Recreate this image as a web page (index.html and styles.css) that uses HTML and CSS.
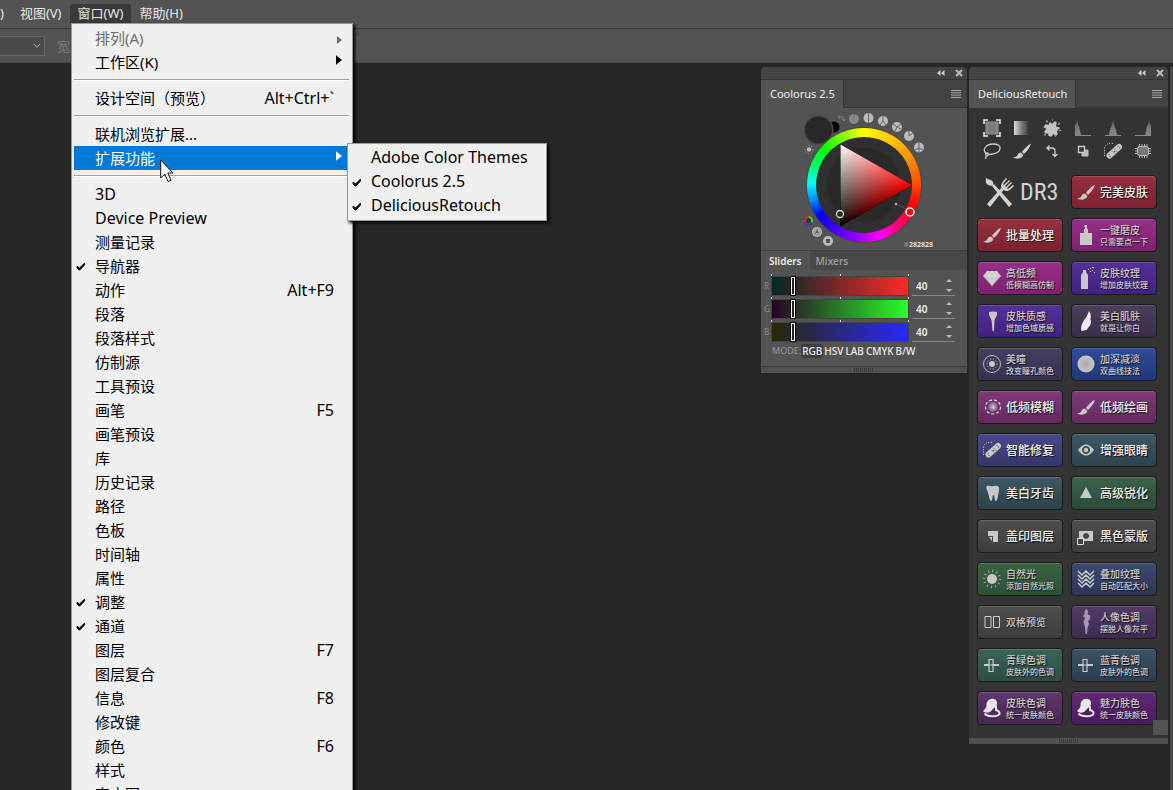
FILE: index.html
```html
<!DOCTYPE html>
<html lang="zh-CN">
<head>
<meta charset="utf-8">
<title>窗口</title>
<link rel="stylesheet" href="styles.css">
</head>
<body>
<svg class="defs" aria-hidden="true">
  <defs>
    <linearGradient id="fade"><stop offset="0" stop-color="#ddd"/><stop offset="1" stop-color="#bbb" stop-opacity="0"/></linearGradient>
    <linearGradient id="spike" x1="0" y1="0" x2="0" y2="1"><stop offset="0" stop-color="#666"/><stop offset="1" stop-color="#888"/></linearGradient>
    <radialGradient id="ball"><stop offset="0" stop-color="#aaa"/><stop offset="1" stop-color="#c6c6c6"/></radialGradient>
    <radialGradient id="soft"><stop offset="0" stop-color="#ddd"/><stop offset="1" stop-color="#aaa" stop-opacity=".3"/></radialGradient>
  </defs>
  <symbol id="check" viewBox="0 0 10 10"><path d="M1 5l2.500 2L8.500 2v2L4 9H3L1 7z" fill="#000" stroke="#000" stroke-width=".8"/></symbol>
  <symbol id="brush" viewBox="0 0 20 20"><path d="M19 2.500c-3 1.500-7 5.500-9 8.500l2 2c3-2.500 6-6.500 7-10.500zM9 11.500c-2 0-3 1-3.500 2.500S3 16.500 1 16.500c3 2 9 1.500 10.500-2.500z"/></symbol>
  <symbol id="patch" viewBox="0 0 20 20"><path d="M6.500 14.500 16 6" stroke="#c9c9c9" stroke-width="6" stroke-linecap="round"/><path d="M9 9.500l4 4M11 7.500l4 4" stroke="#777" stroke-width=".8"/><g fill="#666"><circle cx="6" cy="13.500" r=".7"/><circle cx="7" cy="15.500" r=".7"/><circle cx="15" cy="5.500" r=".7"/><circle cx="16.500" cy="7" r=".7"/><circle cx="11.500" cy="10.500" r=".8"/></g><path d="M10 2.500Q2 1.500 1.500 8v8" fill="none" stroke="#ddd" stroke-dasharray="1 1.500"/></symbol>
  <symbol id="lady" viewBox="0 0 20 20"><path d="M12 1C7 0 4 4 4.500 8c.2 2-2 3-3.500 5 1.500 2 5 2 7 1 2-1 2-3 4-4 2-1 3.500-3 3-5.500C14.700 2.500 13.500 1.300 12 1z"/><path d="M14 8v4c3 1 4 2 3.500 4-2 3-12 3-15-.5" fill="none" stroke="#e8e8e8" stroke-width="2"/></symbol>
  <symbol id="shift" viewBox="0 0 20 20"><path d="M2 10h5m4 0h6" stroke="#c8c8c8" stroke-width="2"/><path d="M7 4.500h4v12H7z" fill="none" stroke="#c8c8c8" stroke-width="1.200"/><path d="M7 10h4" stroke="#c8c8c8"/></symbol>
  <symbol id="more" viewBox="0 0 10 8"><path d="M0 .5h10M0 2.800h10M0 5.100h10M0 7.400h10" stroke="#aaa"/></symbol>
  <symbol id="shrink" viewBox="0 0 8 6"><path d="M3.500 0v6L0 3zM7.500 0v6L4 3z" fill="#ccc"/></symbol>
  <symbol id="close" viewBox="0 0 8 8"><path d="M1 1l6 6M7 1 1 7" stroke="#bbb" stroke-width="2"/></symbol>
</svg>

<nav class="menubar">
  <button class="edge">)</button>
  <button>视图(V)</button>
  <button class="open">窗口(W)</button>
  <button>帮助(H)</button>
</nav>
<div class="options">
  <button class="drop" aria-label="比例"><svg viewBox="0 0 8 6" width="8" height="6"><path d="M1 1l3 3.500L7 1" fill="none" stroke="#aaa"/></svg></button>
  <label for="w">宽度:</label>
  <input id="w" type="text" disabled>
</div>

<main class="workspace">
  <section class="panel coolorus">
    <div class="titlebar"><button aria-label="折叠"><svg width="8" height="6"><use href="#shrink"/></svg></button><button aria-label="关闭"><svg width="8" height="8"><use href="#close"/></svg></button></div>
    <div class="tabs"><button class="tab">Coolorus 2.5</button><button class="more" aria-label="菜单"><svg width="10" height="8"><use href="#more"/></svg></button></div>
    <div class="wheel">
      <svg viewBox="761 108 206 142" width="100%">
        <defs>
          <linearGradient id="hue" gradientUnits="userSpaceOnUse" x1="840" y1="0" x2="912" y2="0"><stop stop-color="#000"/><stop offset="1" stop-color="#f00"/></linearGradient>
          <linearGradient id="white" gradientUnits="userSpaceOnUse" x1="876" y1="205" x2="840" y2="144"><stop stop-color="#000"/><stop offset="1" stop-color="#fff"/></linearGradient>
        </defs>
        <circle cx="834" cy="127" r="5.500" fill="#000"/>
        <circle cx="818.500" cy="130" r="15" fill="#4a4a4a"/>
        <circle cx="818.500" cy="130" r="13.500" fill="#282828"/>
        <circle cx="864" cy="185" r="58" fill="#484848"/>
        <foreignObject x="807" y="128" width="114" height="114"><div class="ring"></div></foreignObject>
        <circle cx="864" cy="185" r="48" fill="#2f2f2f"/>
        <circle cx="864" cy="185" r="37" fill="#292929"/>
        <g class="blend"><path d="M840.500 144.500 912 185 840.500 226z" fill="url(#hue)"/><path class="add" d="M840.500 144.500 912 185 840.500 226z" fill="url(#white)"/></g>
        <circle cx="840" cy="214" r="3.500" fill="#282828" stroke="#ddd" stroke-width="1.300"/>
        <path d="M896 204l10 5" stroke="#555"/><circle cx="896" cy="204" r="1.300" fill="#aaa"/>
        <circle cx="910" cy="212" r="4" fill="#f00" stroke="#fff" stroke-width="1.500"/>
        <path d="M839 117h3q2 0 2 3M840 115l-2 2 2 2M842 119l2 2 2-2" fill="none" stroke="#888" stroke-width=".8"/>
        <g fill="#bbb"><circle cx="854" cy="119" r="5" fill="#888"/><circle cx="868.500" cy="118" r="5"/><circle cx="883" cy="121" r="5"/><circle cx="897" cy="127" r="5"/><circle cx="909" cy="136" r="5"/><circle cx="919" cy="147.500" r="5"/></g>
        <g stroke="#666" stroke-width="1" fill="none"><path d="M854 114v5M868.500 113v10M883 116v5l-3 4m3-4 3 4M893 124l4 3-2 4m2-4 4-3m-4 3 4 2M909 136v-5m0 5 4-3M919 143v9M915 150l4-2 4 2"/></g>
        <circle cx="809" cy="149.500" r="2.200" fill="#bbb"/><circle cx="809" cy="149.500" r="4" fill="none" stroke="#aaa" stroke-dasharray="1 2"/>
        <circle cx="808.500" cy="220.500" r="4.500" fill="#333"/>
        <g fill="none" stroke-width="2"><path d="M808.500 217a3.600 3.600 0 0 0-3 5.500" stroke="#e22"/><path d="M808.500 217a3.600 3.600 0 0 1 3 5.500" stroke="#5c3"/><path d="M805.500 222.500a3.600 3.600 0 0 0 6 0" stroke="#24e"/></g>
        <circle cx="817" cy="232" r="5" fill="#bbb"/><circle cx="817" cy="232" r="3.300" fill="none" stroke="#777" stroke-width=".7"/><path d="M817 229l2.500 4.500h-5z" fill="#666"/>
        <circle cx="828" cy="241" r="5" fill="#bbb"/><path d="M826 239h4v4h-4z" fill="#555"/>
        <text class="hash" x="904" y="247">#</text><text class="hex" x="909" y="247">282828</text>
      </svg>
    </div>
    <div class="subtabs"><button class="on">Sliders</button><button>Mixers</button></div>
    <div class="sliders">
      <div class="channel"><label for="r">R</label><div class="track red"><input id="r" type="range" min="5" max="255" value="40"></div><div class="value"><input type="text" value="40" aria-label="R"><button aria-label="调节 R"><svg viewBox="0 0 6 13" width="6" height="13"><path d="M0 3 3 0l3 3zM0 10l3 3 3-3z" fill="#bbb"/></svg></button></div></div>
      <div class="channel"><label for="g">G</label><div class="track green"><input id="g" type="range" min="5" max="255" value="40"></div><div class="value"><input type="text" value="40" aria-label="G"><button aria-label="调节 G"><svg viewBox="0 0 6 13" width="6" height="13"><path d="M0 3 3 0l3 3zM0 10l3 3 3-3z" fill="#bbb"/></svg></button></div></div>
      <div class="channel"><label for="b">B</label><div class="track blue"><input id="b" type="range" min="5" max="255" value="40"></div><div class="value"><input type="text" value="40" aria-label="B"><button aria-label="调节 B"><svg viewBox="0 0 6 13" width="6" height="13"><path d="M0 3 3 0l3 3zM0 10l3 3 3-3z" fill="#bbb"/></svg></button></div></div>
      <div class="mode"><span>MODE:</span><button class="on">RGB</button><button>HSV</button><button>LAB</button><button>CMYK</button><button>B/W</button></div>
    </div>
    <div class="grip"></div>
  </section>

  <section class="panel retouch">
    <div class="titlebar"><button aria-label="折叠"><svg width="8" height="6"><use href="#shrink"/></svg></button><button aria-label="关闭"><svg width="8" height="8"><use href="#close"/></svg></button></div>
    <div class="tabs"><button class="tab">DeliciousRetouch</button><button class="more" aria-label="菜单"><svg width="10" height="8"><use href="#more"/></svg></button></div>
    <div class="content">
      <div class="tools">
        <button aria-label="选区"><svg viewBox="0 0 20 20"><path d="M4 4h12v12H4z" fill="#7c7c7c" stroke="#999"/><path d="M2 6V2h4M14 2h4v4M18 14v4h-4M6 18H2v-4" fill="none" stroke="#eee" stroke-width="1.500"/></svg></button>
        <button aria-label="渐变"><svg viewBox="0 0 20 20"><path d="M2 3h15v14H2z" fill="url(#fade)"/></svg></button>
        <button aria-label="污点"><svg viewBox="0 0 20 20" fill="#c4c4c4"><path d="M8 5l2 2 3-3 1 1-1 4 4 1-3 3 1 3-1 1-3-2-2 3-2-1v-3l-3 1-1-1 2-3-2-3 1-1 3 1z" stroke="#c4c4c4" stroke-width="1.500" stroke-linejoin="round"/><path d="M4 2l2 1-1 2zM17 4l1 2-2 1zM1 9l2-1v2zM17.500 11.500l2 1-2 1zM12 17l2 1-1 1zM2 16l2 .5-1 2zM10 1l1 1-1 1z"/></svg></button>
        <button aria-label="阴影"><svg viewBox="0 0 20 20"><path d="M2 17V5l1 3 1-6 1 5 1 1 1 5 1 4z" fill="url(#spike)"/><path d="M2 17.500h16" stroke="#888"/></svg></button>
        <button aria-label="中间调"><svg viewBox="0 0 20 20"><path d="M6 17l1-5 2-5 1-5 1 5 2 5 1 5z" fill="url(#spike)"/><path d="M2 17.500h16" stroke="#888"/></svg></button>
        <button aria-label="高光"><svg viewBox="0 0 20 20"><path d="M18 17V5l-1 3-1-6-1 5-1 1-1 5-1 4z" fill="url(#spike)"/><path d="M2 17.500h16" stroke="#888"/></svg></button>
        <button aria-label="套索"><svg viewBox="0 0 20 20" fill="none" stroke="#ccc" stroke-width="1.300"><path d="M5 13C-1 9 4 3 11 3c10 0 9 8 0 10-3 .5-5 .3-6-.5M5 12c-2 0-2 3 0 3 2-.5 2-3 0-3zM5 15q-2 0-1 3"/></svg></button>
        <button aria-label="画笔"><svg fill="#ccc"><use href="#brush"/></svg></button>
        <button aria-label="交换"><svg viewBox="0 0 20 20" fill="none" stroke="#ccc" stroke-width="1.300"><path d="M5 7h5q3 0 3 3v5M7.500 4.500 5 7l2.500 2.500M10.500 13l2.500 2.500 2.500-2.500"/></svg></button>
        <button aria-label="前景背景"><svg viewBox="0 0 20 20"><path d="M9 9h6v6H9z" fill="#bbb" stroke="#bbb"/><path d="M5.500 5.500h6v6h-6z" fill="#333" stroke="#ccc" stroke-width="1.300"/></svg></button>
        <button aria-label="修复"><svg><use href="#patch"/></svg></button>
        <button aria-label="芯片"><svg viewBox="0 0 20 20"><rect x="4.500" y="5.500" width="11" height="9" rx="2" fill="#777" stroke="#bbb"/><path d="M6.500 5V3m2.500 2V3m2.500 2V3M14 5V3M6.500 15v2M9 15v2m2.500-2v2m2.500-2v2M4 7.500H2M4 10H2m2 2.500H2m14-5h2M16 10h2m-2 2.500h2" stroke="#bbb"/></svg></button>
      </div>
      <div class="actions">
        <div class="brand"><svg viewBox="0 0 32 32" width="32" height="32" fill="#d2d2d2"><path d="M2 1c0 3-1 5 1 7s5 2 6 1 0-4-2-5-5-1-5-3zM8 10l2-2 18 20-3 3zM3 28 19 10l2 2L6 31z"/><path d="m19 14-2-4c0-3 5-8 5-8l1 1-4 5 1 1 5-5 1 1-5 5 1 1 5-5 1 1-5 5 1 1 5-4 1 1s-5 6-8 5z"/></svg><span>DR3</span></div>
        <button class="act red"><svg><use href="#brush"/></svg><strong>完美皮肤</strong></button>
        <button class="act red"><svg><use href="#brush"/></svg><strong>批量处理</strong></button>
        <button class="act magenta"><svg viewBox="0 0 20 20"><path d="M9 0h2v4h1v4h4v12H4V8h4V4h1V2H8z"/></svg><span>一键磨皮<small>只需要点一下</small></span></button>
        <button class="act magenta"><svg viewBox="0 0 20 20"><path d="M5 3h10l4 5-9 10L1 8z"/><path d="M1 8h18M5 3l2 5 3 10 3-10 2-5M7 8l3-5 3 5" fill="none" stroke="#fff" stroke-opacity=".5" stroke-width=".7"/></svg><span>高低频<small>低模糊高仿制</small></span></button>
        <button class="act violet"><svg viewBox="0 0 20 24" class="tall"><path d="M7 4h3v2l2 3v14H5V9l2-3zM12 3h1v1h-1zM14 2h1v1h-1zM14 5h1v1h-1zM16 1h2v1h-2zM16 4h1v1h-1zM18 6h1v1h-1z"/></svg><span>皮肤纹理<small>增加皮肤纹理</small></span></button>
        <button class="act violet"><svg viewBox="0 0 20 20"><path d="M7 1q4-1 8 0v3l-2.500 5-.5 11h-1.500L9.500 9 7 4z"/></svg><span>皮肤质感<small>增加色域质感</small></span></button>
        <button class="act plum"><svg viewBox="0 0 20 20" fill="#eee"><path d="M13 0c2 2 2 5 1.500 8 1 3 .5 5-1 7l-3 4-5 1c-1-3 0-7 2-10S12 4 13 0z"/></svg><span>美白肌肤<small>就是让你白</small></span></button>
        <button class="act dusk"><svg viewBox="0 0 20 20"><circle cx="10" cy="10" r="8.500" fill="none" stroke="#bbb"/><circle cx="10" cy="10" r="3"/><circle cx="10" cy="10" r="5" fill="none" stroke="#ccc" stroke-dasharray="1 2"/></svg><span>美瞳<small>改变瞳孔颜色</small></span></button>
        <button class="act blue"><svg viewBox="0 0 20 20"><circle cx="10" cy="10" r="8.500" fill="url(#ball)"/></svg><span>加深减淡<small>双曲线技法</small></span></button>
        <button class="act rose"><svg viewBox="0 0 20 20"><circle cx="11" cy="10" r="5" fill="url(#soft)"/><ellipse cx="11" cy="10" rx="7.500" ry="7" fill="none" stroke="#ddd" stroke-width="1.200" stroke-dasharray="3 2"/></svg><strong>低频模糊</strong></button>
        <button class="act rose"><svg><use href="#brush"/></svg><strong>低频绘画</strong></button>
        <button class="act indigo"><svg><use href="#patch"/></svg><strong>智能修复</strong></button>
        <button class="act teal"><svg viewBox="0 0 20 20"><path fill-rule="evenodd" d="M2 10q8-11 16 0-8 11-16 0zm8-4a4 4 0 1 0 .1 0z"/><circle cx="10" cy="10" r="2.200"/></svg><strong>增强眼睛</strong></button>
        <button class="act teal"><svg viewBox="0 0 20 20"><path d="M5 3c3-1 4 1 7 0 3-1 6 0 5 5-1 3-1 9-3 10-2 0-1-6-2.500-6S11 18 9 18C7 17 7 11 5.500 8S4 4 5 3z"/></svg><strong>美白牙齿</strong></button>
        <button class="act green"><svg viewBox="0 0 20 20"><path d="M10 4l6 11H4z"/></svg><strong>高级锐化</strong></button>
        <button class="act gray"><svg viewBox="0 0 20 20"><path d="M6 5h10v11h-5v-6H6zM7 11h3v4z"/></svg><strong>盖印图层</strong></button>
        <button class="act gray"><svg viewBox="0 0 20 20"><path fill-rule="evenodd" d="M3 5h14v10H3zm7 2a3 3 0 1 0 .1 0z"/><path d="M1.500 12.500h6v6h-6z" fill="#444" stroke="#ddd"/></svg><strong>黑色蒙版</strong></button>
        <button class="act leaf"><svg viewBox="0 0 20 20"><circle cx="10" cy="10" r="5"/><circle cx="10" cy="10" r="8" fill="none" stroke="#aaa" stroke-width="2.500" stroke-dasharray="1 3.190"/></svg><span>自然光<small>添加自然光照</small></span></button>
        <button class="act slate"><svg viewBox="0 0 20 20" fill="none" stroke="#c8c8c8" stroke-width="1.500"><path d="M2 2l4 4 4-4 4 4 4-4M2 6l4 4 4-4 4 4 4-4M2 10l4 4 4-4 4 4 4-4M2 14l4 4 4-4 4 4 4-4"/></svg><span>叠加纹理<small>自动匹配大小</small></span></button>
        <button class="act gray"><svg viewBox="0 0 20 20"><path d="M3 4.500h6v11H3zM11.500 4.500h6v11h-6z" fill="none" stroke="#ccc"/></svg><span>双格预览</span></button>
        <button class="act purple"><svg viewBox="0 0 12 26" class="tall" fill="#a598ad"><path d="M5 1c2-1 3 0 3 2l-.5 2 3 2-1 4-1.500 1 1 3-1.500 4L7 25H5.500L5 18l-1.500-5L5 9 3 7l1.500-2z"/></svg><span>人像色调<small>摆脱人像灰平</small></span></button>
        <button class="act jade"><svg><use href="#shift"/></svg><span>青绿色调<small>皮肤外的色调</small></span></button>
        <button class="act steel"><svg><use href="#shift"/></svg><span>蓝青色调<small>皮肤外的色调</small></span></button>
        <button class="act grape"><svg fill="#e8e8e8"><use href="#lady"/></svg><span>皮肤色调<small>统一皮肤颜色</small></span></button>
        <button class="act orchid"><svg fill="#e8e8e8"><use href="#lady"/></svg><span>魅力肤色<small>统一皮肤颜色</small></span></button>
      </div>
      <div class="corner"></div>
    </div>
    <div class="grip"></div>
  </section>
  <div class="dock"></div>
</main>

<div class="popup menu" role="menu">
  <button class="item dim">排列(A)<svg class="arrow" viewBox="0 0 5 8"><path d="M0 0l5 4-5 4z"/></svg></button>
  <button class="item">工作区(K)<svg class="arrow big" viewBox="0 0 5 8"><path d="M0 0l5 4-5 4z"/></svg></button>
  <hr>
  <button class="item">设计空间（预览）<kbd>Alt+Ctrl+`</kbd></button>
  <hr>
  <button class="item">联机浏览扩展...</button>
  <button class="item active">扩展功能<svg class="arrow big" viewBox="0 0 5 8"><path d="M0 0l5 4-5 4z"/></svg></button>
  <hr>
  <button class="item latin">3D</button>
  <button class="item latin">Device Preview</button>
  <button class="item">测量记录</button>
  <button class="item"><svg class="tick"><use href="#check"/></svg>导航器</button>
  <button class="item">动作<kbd>Alt+F9</kbd></button>
  <button class="item">段落</button>
  <button class="item">段落样式</button>
  <button class="item">仿制源</button>
  <button class="item">工具预设</button>
  <button class="item">画笔<kbd>F5</kbd></button>
  <button class="item">画笔预设</button>
  <button class="item">库</button>
  <button class="item">历史记录</button>
  <button class="item">路径</button>
  <button class="item">色板</button>
  <button class="item">时间轴</button>
  <button class="item">属性</button>
  <button class="item"><svg class="tick"><use href="#check"/></svg>调整</button>
  <button class="item"><svg class="tick"><use href="#check"/></svg>通道</button>
  <button class="item">图层<kbd>F7</kbd></button>
  <button class="item">图层复合</button>
  <button class="item">信息<kbd>F8</kbd></button>
  <button class="item">修改键</button>
  <button class="item">颜色<kbd>F6</kbd></button>
  <button class="item">样式</button>
  <button class="item">直方图</button>
</div>
<div class="popup submenu" role="menu">
  <button class="item latin">Adobe Color Themes</button>
  <button class="item latin"><svg class="tick"><use href="#check"/></svg>Coolorus 2.5</button>
  <button class="item latin"><svg class="tick"><use href="#check"/></svg>DeliciousRetouch</button>
</div>
<svg class="cursor" viewBox="0 0 15 24" width="15" height="24"><path d="M.7 1v18l4-4 3.300 7.500 3-1.300L7.800 14H13z" fill="#fff" stroke="#111"/></svg>
</body>
</html>
```
FILE: styles.css
```css
* { box-sizing: border-box; }
body {
  margin: 0;
  height: 100vh;
  overflow: hidden;
  position: relative;
  display: flex;
  flex-direction: column;
  background: #262626;
  color: #ddd;
  font: 12px/16px "Noto Sans", "Noto Sans CJK SC", sans-serif;
}
button, input { font: inherit; color: inherit; background: none; border: 0; padding: 0; margin: 0; }
.defs { position: absolute; width: 0; height: 0; }

.menubar { display: flex; height: 28px; padding-top: 4px; background: #535353; }
.menubar button { height: 20px; padding: 0 8px 2px; font-size: 13px; line-height: 18px; color: #e6e6e6; white-space: nowrap; }
.menubar .edge { padding: 0 8px 2px 0; }
.menubar .open { background: #3a3a3a; border-radius: 3px 3px 0 0; }
.options { display: flex; align-items: center; gap: 12px; height: 35px; background: #535353; border-top: 1px solid #3a3a3a; border-bottom: 1px solid #484848; color: #7c7c7c; font-size: 13px; }
.drop { width: 45px; height: 20px; padding-right: 3px; border: 1px solid #686868; border-left: 0; background: #4b4b4b; display: flex; align-items: center; justify-content: flex-end; }
.options input { width: 260px; height: 20px; border: 1px solid #606060; }

.workspace { flex: 1; display: flex; justify-content: flex-end; align-items: flex-start; gap: 2px; padding-top: 4px; }
.dock { width: 3px; align-self: stretch; background: #4a4a4a; }
.panel { background: #535353; border-radius: 5px 5px 0 0; overflow: hidden; }
.coolorus { width: 206px; }
.retouch { width: 199px; }
.titlebar { display: flex; justify-content: flex-end; align-items: center; gap: 10px; height: 13px; padding-right: 4px; background: #434343; border-bottom: 1px solid #333; }
.titlebar button { display: flex; }
.tabs { display: flex; justify-content: space-between; align-items: center; height: 28px; padding-right: 6px; background: #434343; box-shadow: inset 0 -1px #373737; }
.tab { height: 28px; padding: 0 8px 0 9px; background: #535353; border-right: 1px solid #383838; font-size: 11px; color: #eee; }
.more { display: flex; }
.grip { height: 7px; background: repeating-linear-gradient(90deg, #3c3c3c 0 1px, #505050 1px 2px) center / 20px 4px no-repeat #505050; border-top: 1px solid #383838; }

.wheel svg { display: block; }
.ring { width: 100%; height: 100%; border-radius: 50%; background: conic-gradient(#ff0, #ff9000 60deg, #ff5000 88deg, #f00 112deg, #ff0080 142deg, #f0f 162deg, #80f 190deg, #4000ff 215deg, #00f 236deg, #0080ff 252deg, #0ff 272deg, #00ff60 292deg, #0f0 312deg, #9f0 340deg, #ff0); }
.blend { isolation: isolate; }
.add { mix-blend-mode: plus-lighter; }
.hash, .hex { font-size: 7px; fill: #999; }
.hex { font-weight: 600; fill: #eee; }
.subtabs { display: flex; height: 20px; background: #484848; border-top: 1px solid #3e3e3e; }
.subtabs button { padding: 0 6px; font-size: 10px; font-weight: 600; color: #999; }
.subtabs .on { background: #535353; color: #eee; padding: 0 8px; }
.sliders { padding: 3px 12px 7px 3px; }
.channel { display: flex; align-items: flex-end; height: 23px; }
.channel label { width: 7px; font-size: 8px; line-height: 20px; color: #8c8c8c; }
.track { width: 138px; height: 22px; padding-top: 2px; background: linear-gradient(#eee, #eee) 0 0 / 1px 2px no-repeat, linear-gradient(#eee, #eee) 50% 0 / 1px 2px no-repeat, linear-gradient(#eee, #eee) 100% 0 / 1px 2px no-repeat; }
.track input { display: block; appearance: none; width: 100%; height: 20px; border: 1px solid #444; }
.track.red input { background: linear-gradient(90deg, #002828, #ff2828); }
.track.green input { background: linear-gradient(90deg, #280028, #28ff28); }
.track.blue input { background: linear-gradient(90deg, #282800, #2828ff); }
.track input::-webkit-slider-thumb { appearance: none; width: 6px; height: 20px; border: 2px solid #000; border-width: 1px; outline: 0; box-shadow: inset 0 0 0 1px #fff; background: #222; }
.value { flex: 1; height: 20px; margin-left: 3px; padding: 0 3px 0 4px; display: flex; align-items: center; justify-content: space-between; border-bottom: 1px solid #888; }
.value input { width: 24px; font-size: 10px; font-weight: 600; color: #eee; }
.value button { display: flex; }
.mode { display: flex; align-items: center; height: 16px; padding-left: 8px; margin-top: 1px; font-size: 9px; line-height: 14px; color: #999; }
.mode button { padding: 0 1px; font-size: 10px; font-weight: 500; color: #eee; }
.mode .on { background: #3e3e3e; border-radius: 2px; }

.retouch .content { background: #333; position: relative; padding: 10px 11px 12px 8px; }
.tools { display: grid; grid-template-columns: repeat(6, 1fr); row-gap: 3px; margin-right: -1px; }
.tools button { display: flex; justify-content: center; }
.tools svg { width: 20px; height: 20px; }
.actions { display: grid; grid-template-columns: 1fr 1fr; gap: 9px 8px; margin-top: 14px; }
.brand { display: flex; align-items: center; gap: 4px; padding-left: 7px; height: 34px; color: #d2d2d2; font: 24px/34px "Liberation Sans Narrow", "Roboto Condensed", Roboto, sans-serif; }
.brand svg { flex: none; }
.act { display: flex; align-items: center; gap: 4px; height: 34px; padding: 0 0 0 4px; border: 1px solid #1c1c1c; border-radius: 4px; box-shadow: inset 0 1px rgba(255, 255, 255, .15); color: #cdc6cd; fill: #c8c8c8; text-align: left; white-space: nowrap; text-shadow: 1px 1px 1px #111; font: 500 10px/12px "Noto Sans CJK SC", sans-serif; }
.act svg { width: 20px; height: 20px; flex: none; }
.act .tall { height: 26px; }
.act strong { font-size: 12px; font-weight: 500; line-height: 16px; color: #eee; }
.act small { display: block; font-size: 8px; line-height: 11px; }
.act.red { background: linear-gradient(#963040, #7e2030); }
.act.magenta { background: linear-gradient(#963088, #802070); }
.act.violet { background: linear-gradient(#56309a, #432080); }
.act.plum { background: linear-gradient(#4b3e5e, #3b2e4c); }
.act.dusk { background: linear-gradient(#464060, #343050); }
.act.blue { background: linear-gradient(#2e4c98, #20387a); }
.act.rose { background: linear-gradient(#7d3a78, #652860); }
.act.indigo { background: linear-gradient(#484888, #36366c); }
.act.teal { background: linear-gradient(#3e5762, #2c434e); }
.act.green { background: linear-gradient(#3a624a, #2a4c38); }
.act.gray { background: linear-gradient(#4e4e4e, #3e3e3e); }
.act.leaf { background: linear-gradient(#3a6444, #2a5032); }
.act.slate { background: linear-gradient(#3e4a70, #2c3658); }
.act.purple { background: linear-gradient(#523c68, #3e2a52); }
.act.jade { background: linear-gradient(#3a6458, #2a4e44); }
.act.steel { background: linear-gradient(#3c5264, #2a3e50); }
.act.grape { background: linear-gradient(#5e386a, #482652); }
.act.orchid { background: linear-gradient(#602a74, #4c1862); }
.corner { position: absolute; right: 0; bottom: 2px; width: 15px; height: 15px; background: #535353; }

.popup { position: absolute; background: #f0f0f0; border: 1px solid #999; box-shadow: 2px 2px 3px #000; color: #000; }
.menu { left: 71px; top: 23px; width: 282px; padding: 2px 3px 0 2px; }
.submenu { left: 347px; top: 143px; width: 200px; padding: 2px; }
.item { position: relative; display: flex; align-items: center; justify-content: space-between; width: 100%; height: 24px; padding: 0 15px 0 21px; font-size: 15px; line-height: 24px; text-align: left; white-space: nowrap; }
.item kbd { font: inherit; }
.item.latin, .item kbd { font-size: 16px; line-height: 22px; }
.submenu .item { padding-bottom: 2px; }
.item.dim { color: #6d6d6d; fill: #6d6d6d; }
.item.active { background: #0078d7; color: #fff; fill: #fff; }
.popup hr { height: 2px; margin: 5px 0; border: 0; border-top: 1px solid #a0a0a0; border-bottom: 1px solid #fff; }
.arrow { position: absolute; right: 7px; top: 10px; width: 5px; height: 8px; }
.arrow.big { top: 5px; width: 6px; height: 10px; }
.tick { position: absolute; left: 2px; top: 7px; width: 10px; height: 10px; }
.cursor { position: absolute; left: 160px; top: 159px; }
```
